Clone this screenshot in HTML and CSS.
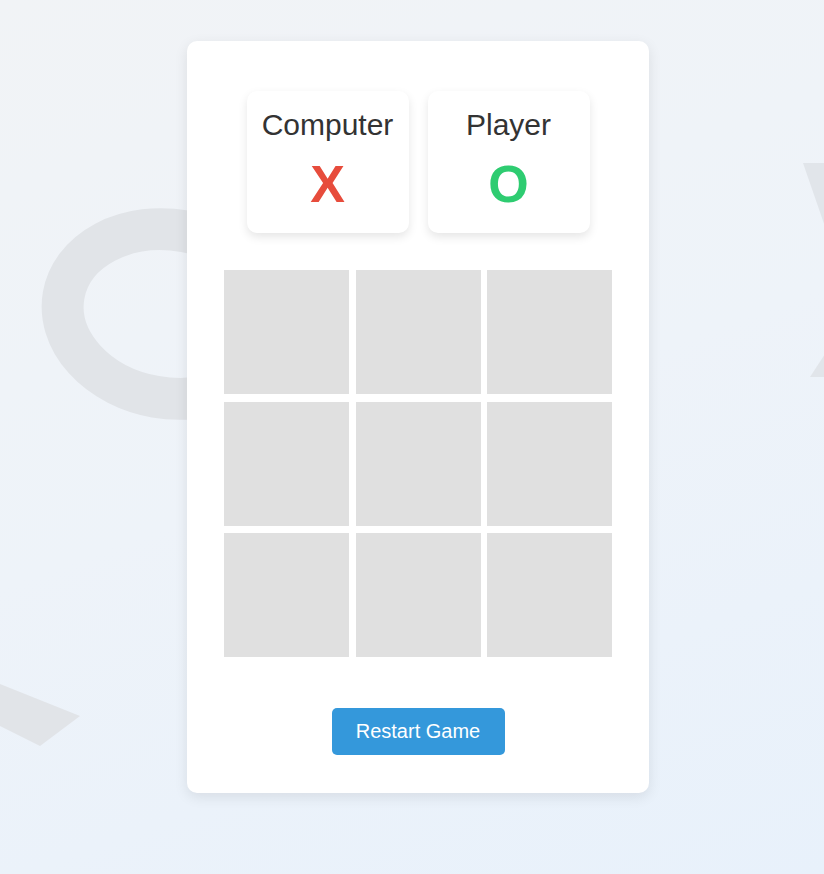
FILE: index.html
```html
<!DOCTYPE html>
<html lang="en">
<head>
<meta charset="utf-8">
<title>Tic Tac Toe</title>
<link rel="stylesheet" href="styles.css">
</head>
<body>
<svg class="bg-shapes" width="824" height="874" viewBox="0 0 824 874" aria-hidden="true">
  <ellipse cx="170" cy="314" rx="108" ry="84" transform="rotate(10 170 314)" fill="none" stroke="#e1e4e8" stroke-width="42"/>
  <polygon points="803,163 835,163 900,270 840,270" fill="#e1e5ea"/>
  <polygon points="810,377 842,377 900,300 860,300" fill="#e1e5ea"/>
  <polygon points="-40,668 0,684 80,716 40,746 0,726 -40,706" fill="#e1e4e8"/>
</svg>
<main class="game">
  <section class="scoreboard">
    <div class="score-card">
      <div class="score-name">Computer</div>
      <div class="score-mark mark-x">X</div>
    </div>
    <div class="score-card">
      <div class="score-name">Player</div>
      <div class="score-mark mark-o">O</div>
    </div>
  </section>
  <section class="board">
    <div class="cell"></div>
    <div class="cell"></div>
    <div class="cell"></div>
    <div class="cell"></div>
    <div class="cell"></div>
    <div class="cell"></div>
    <div class="cell"></div>
    <div class="cell"></div>
    <div class="cell"></div>
  </section>
  <button class="restart">Restart Game</button>
</main>
</body>
</html>
```

FILE: styles.css
```css
* { box-sizing: border-box; }
html, body { height: 100%; }
body {
  margin: 0;
  font-family: "Liberation Sans", Arial, sans-serif;
  background: linear-gradient(160deg, #f1f3f6 0%, #eef3f9 50%, #e8f1fb 100%);
  overflow: hidden;
  position: relative;
  display: flex;
  justify-content: center;
  align-items: flex-start;
}
.bg-shapes {
  position: absolute;
  left: 0;
  top: 0;
  z-index: 0;
}
.game {
  position: relative;
  z-index: 1;
  margin-top: 41px;
  margin-left: 12px;
  width: 462px;
  height: 752px;
  background: #fff;
  border-radius: 10px;
  box-shadow: 0 4px 14px rgba(0, 0, 0, 0.09);
  display: flex;
  flex-direction: column;
  align-items: center;
  padding-top: 50px;
}
.scoreboard {
  display: flex;
  gap: 19px;
}
.score-card {
  width: 162px;
  height: 142px;
  border-radius: 10px;
  background: #fff;
  box-shadow: 0 4px 10px rgba(0, 0, 0, 0.1);
  display: flex;
  flex-direction: column;
  align-items: center;
  padding-top: 17px;
}
.score-name {
  font-size: 30px;
  line-height: 34px;
  color: #333;
}
.score-mark {
  font-size: 52px;
  font-weight: bold;
  line-height: 60px;
  margin-top: 12px;
}
.mark-x { color: #e74c3c; }
.mark-o { color: #2ecc71; }
.board {
  margin-top: 37px;
  display: grid;
  grid-template-columns: repeat(3, 125px);
  grid-template-rows: repeat(3, 124px);
  gap: 7.5px 6.5px;
}
.cell {
  background: #e0e0e0;
}
.restart {
  margin-top: 51px;
  width: 173px;
  height: 47px;
  border: none;
  border-radius: 5px;
  background: #3498db;
  color: #fff;
  font-family: "Liberation Sans", Arial, sans-serif;
  font-size: 20px;
  cursor: pointer;
}
```
